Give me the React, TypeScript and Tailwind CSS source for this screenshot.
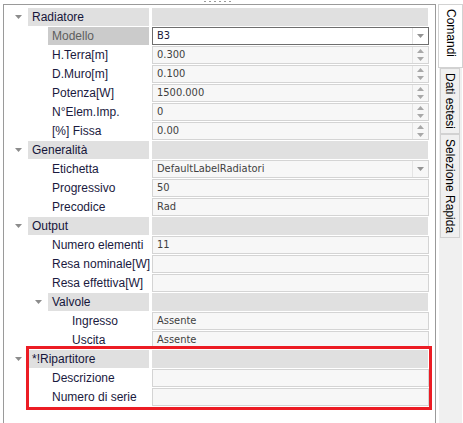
import React from "react";

type Editor = "active" | "spin" | "dropdown" | "text";
type Row =
  | { kind: "header"; level: number; label: string }
  | { kind: "prop"; level: number; label: string; value: string; editor: Editor; selected?: boolean };

const rows: Row[] = [
  { kind: "header", level: 0, label: "Radiatore" },
  { kind: "prop", level: 1, label: "Modello", value: "B3", editor: "active", selected: true },
  { kind: "prop", level: 1, label: "H.Terra[m]", value: "0.300", editor: "spin" },
  { kind: "prop", level: 1, label: "D.Muro[m]", value: "0.100", editor: "spin" },
  { kind: "prop", level: 1, label: "Potenza[W]", value: "1500.000", editor: "spin" },
  { kind: "prop", level: 1, label: "N°Elem.Imp.", value: "0", editor: "spin" },
  { kind: "prop", level: 1, label: "[%] Fissa", value: "0.00", editor: "spin" },
  { kind: "header", level: 0, label: "Generalità" },
  { kind: "prop", level: 1, label: "Etichetta", value: "DefaultLabelRadiatori", editor: "dropdown" },
  { kind: "prop", level: 1, label: "Progressivo", value: "50", editor: "text" },
  { kind: "prop", level: 1, label: "Precodice", value: "Rad", editor: "text" },
  { kind: "header", level: 0, label: "Output" },
  { kind: "prop", level: 1, label: "Numero elementi", value: "11", editor: "text" },
  { kind: "prop", level: 1, label: "Resa nominale[W]", value: "", editor: "text" },
  { kind: "prop", level: 1, label: "Resa effettiva[W]", value: "", editor: "text" },
  { kind: "header", level: 1, label: "Valvole" },
  { kind: "prop", level: 2, label: "Ingresso", value: "Assente", editor: "text" },
  { kind: "prop", level: 2, label: "Uscita", value: "Assente", editor: "text" },
  { kind: "header", level: 0, label: "*!Ripartitore" },
  { kind: "prop", level: 1, label: "Descrizione", value: "", editor: "text" },
  { kind: "prop", level: 1, label: "Numero di serie", value: "", editor: "text" },
];

const indent = [24, 44, 64];
const valueFont = '"DejaVu Sans Condensed", "Liberation Sans", Arial, sans-serif';

function Down({ color = "#8c8c8c" }: { color?: string }) {
  return (
    <svg width="7" height="4" viewBox="0 0 7 4">
      <polygon points="0,0 7,0 3.5,4" fill={color} />
    </svg>
  );
}
function Up({ color = "#a8a8a8" }: { color?: string }) {
  return (
    <svg width="7" height="4" viewBox="0 0 7 4">
      <polygon points="0,4 7,4 3.5,0" fill={color} />
    </svg>
  );
}

function ValueCell({ row }: { row: Extract<Row, { kind: "prop" }> }) {
  const active = row.editor === "active";
  return (
    <div
      className={`flex h-[18px] w-[277px] items-stretch border ${
        active ? "border-[#6e6e6e] bg-white" : "border-[#d4d4d4] bg-[#f7f7f7]"
      }`}
    >
      <div
        className={`flex-1 truncate pl-[4px] text-[11px] leading-[16px] ${
          active ? "text-[#1a1a3a]" : "text-[#3f3f3f]"
        }`}
        style={{ fontFamily: valueFont }}
      >
        {row.value}
      </div>
      {(row.editor === "active" || row.editor === "dropdown") && (
        <div className="flex w-[16px] items-center justify-center border-l border-[#e4e4e4]">
          <Down color="#939393" />
        </div>
      )}
      {row.editor === "spin" && (
        <div className="flex w-[16px] flex-col items-center justify-between border-l border-[#e4e4e4] py-[2px]">
          <Up />
          <Down color="#a8a8a8" />
        </div>
      )}
    </div>
  );
}

function GridRow({ row }: { row: Row }) {
  const pad = indent[row.level];
  if (row.kind === "header") {
    return (
      <div className="mb-[1px] flex h-[18px]">
        <div className="flex w-[145px]">
          <div className="flex items-center justify-end pr-[6px]" style={{ width: pad }}>
            <Down />
          </div>
          <div className="flex-1 whitespace-nowrap bg-[#e0e0e0] pl-[4px] text-[12px] leading-[18px] text-[#15153a]">
            {row.label}
          </div>
        </div>
        <div className="ml-[3px] w-[276px] bg-[#e0e0e0]" />
      </div>
    );
  }
  return (
    <div className="mb-[1px] flex h-[18px]">
      <div className="flex w-[145px]">
        <div className="shrink-0" style={{ width: pad }} />
        <div
          className={`flex-1 whitespace-nowrap pl-[4px] text-[12px] leading-[18px] ${
            row.selected ? "bg-[#cbcbcb] text-[#5e5e5e]" : "text-[#1a1a40]"
          }`}
        >
          {row.label}
        </div>
      </div>
      <div className="relative ml-[3px]">
        <ValueCell row={row} />
      </div>
    </div>
  );
}

function Tab({ label, active, h }: { label: string; active?: boolean; h: number }) {
  return (
    <div
      className={`flex items-start justify-center border border-[#d2d2d2] pt-[4px] text-[12px] text-black ${
        active ? "ml-[1px] w-[25px] bg-white" : "ml-[3px] w-[20px] bg-[#f0f0f0]"
      }`}
      style={{ height: h }}
    >
      <span className="[writing-mode:vertical-rl] leading-[18px]">{label}</span>
    </div>
  );
}

export default function App() {
  return (
    <div
      className="relative flex h-[423px] w-[463px] flex-col overflow-hidden bg-white"
      style={{ fontFamily: '"Liberation Sans", Arial, sans-serif' }}
    >
      <div className="flex h-[4px] justify-center pl-[2px]">
        <div className="mr-[30px] flex gap-[3px] pt-[1px]">
          {[0, 1, 2, 3, 4, 5].map((i) => (
            <div key={i} className="h-[1px] w-[2px] bg-[#9a9a9a]" />
          ))}
        </div>
      </div>
      <div className="flex flex-1">
        <div className="ml-[3px] h-full w-[433px] border-l border-r border-t border-[#9a9a9a] pt-[3px]">
          {rows.map((r, i) => (
            <GridRow key={i} row={r} />
          ))}
        </div>
        <div className="relative ml-[1px] flex-1">
          <div className="absolute bottom-0 left-[2px] top-0 w-[23px] bg-[#f0f0f0]" />
          <div className="relative flex flex-col">
            <Tab label="Comandi" active h={64} />
            <Tab label="Dati estesi" h={66} />
            <Tab label="Selezione Rapida" h={104} />
          </div>
        </div>
      </div>
      <div className="pointer-events-none absolute left-[26px] top-[346px] h-[64px] w-[406px] border-[3px] border-[#ec1c24]" />
    </div>
  );
}
